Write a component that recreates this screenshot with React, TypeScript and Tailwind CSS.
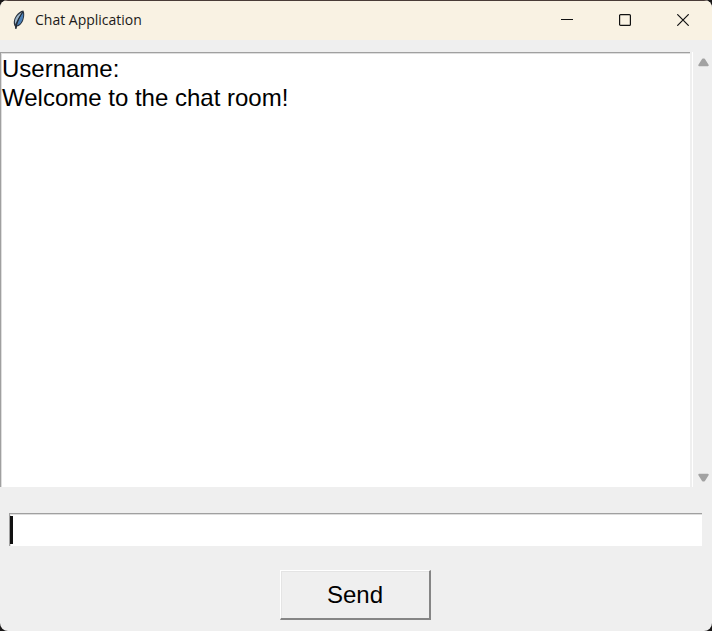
import { useState } from 'react'

function Feather() {
  return (
    <svg viewBox="0 0 14 20" className="h-5 w-3.5" aria-hidden="true">
      <path d="M11.3 0.6C12.8 2.6 12.4 7.6 11 11C9.6 14 7.4 16 5 16.6L4.4 19L3.2 18.8L3 16.6C1 14 1.6 9.4 4 5.8C6 2.9 8.6 1 11.3 0.6Z" fill="#2b3440" />
      <path d="M10 2.2C6.6 3.8 3.6 7.2 2.9 11L3.2 14.6C5 10.6 7.4 6 10 2.2Z" fill="#9db6ca" />
      <path d="M11 2.6C11.7 6 10.8 10 9 12.6C7.6 14.4 6.2 15.2 4.6 15.6C6 11.4 8.2 6.6 11 2.6Z" fill="#4a80b8" />
      <path d="M10.6 2.4C7.6 6.4 5 11.4 3.8 18.6" fill="none" stroke="#1b2129" strokeWidth="0.7" />
    </svg>
  )
}

function TitleBar() {
  const button = 'flex h-full w-[58px] items-center justify-center hover:bg-black/5'

  return (
    <header className="flex h-10 items-center justify-between border-t border-[#4a3c38] bg-[#f9f2e3] pb-px">
      <div className="flex items-center gap-[9px] pl-3">
        <Feather />
        <h1 className="font-['Open_Sans',sans-serif] text-[14px] leading-5 text-[#1b1a18]">Chat Application</h1>
      </div>
      <div className="flex h-full">
        <button type="button" aria-label="Minimize" className={button}>
          <svg viewBox="0 0 12 12" className="h-3 w-3" stroke="#111" strokeWidth="1">
            <path d="M0 5.5H12" />
          </svg>
        </button>
        <button type="button" aria-label="Maximize" className={button}>
          <svg viewBox="0 0 12 12" className="h-3 w-3" fill="none" stroke="#111" strokeWidth="1.2">
            <rect x="0.6" y="0.6" width="10.8" height="10.8" rx="1" />
          </svg>
        </button>
        <button type="button" aria-label="Close" className={button}>
          <svg viewBox="0 0 12 12" className="h-3 w-3" stroke="#111" strokeWidth="1.2">
            <path d="M0.3 0.3L11.7 11.7M11.7 0.3L0.3 11.7" />
          </svg>
        </button>
      </div>
    </header>
  )
}

function ScrollBar() {
  return (
    <div className="flex w-[18px] flex-col items-center justify-between py-1">
      <button type="button" aria-label="Scroll up" className="flex h-3 w-full items-center justify-center">
        <svg viewBox="0 0 11 9" className="h-[9px] w-[11px]">
          <path d="M4.8 1.5H6.2L9.8 7.3H1.2Z" fill="#a2a2a2" stroke="#a2a2a2" strokeWidth="1.8" strokeLinejoin="round" />
        </svg>
      </button>
      <button type="button" aria-label="Scroll down" className="flex h-3 w-full items-center justify-center">
        <svg viewBox="0 0 11 9" className="h-[9px] w-[11px]">
          <path d="M4.8 7.5H6.2L9.8 1.7H1.2Z" fill="#a2a2a2" stroke="#a2a2a2" strokeWidth="1.8" strokeLinejoin="round" />
        </svg>
      </button>
    </div>
  )
}

export default function App() {
  const [log, setLog] = useState('Username:\nWelcome to the chat room!')
  const [message, setMessage] = useState('')

  function send(e: React.FormEvent) {
    e.preventDefault()
    if (!message) return
    setLog(log + '\n' + message)
    setMessage('')
  }

  return (
    <div className="min-h-screen bg-[#1a1818]">
      <div className="flex min-h-screen flex-col overflow-hidden rounded-lg bg-[#efefef] font-['Liberation_Sans',Arial,sans-serif] text-2xl text-black">
        <TitleBar />

        {/* Chat log */}
        <main className="mt-3 flex flex-1">
          <textarea
            readOnly
            aria-label="Chat log"
            value={log}
            className="mr-0.5 flex-1 resize-none border-t border-l border-[#a0a0a0] bg-white pt-px pl-px leading-[29px] shadow-[inset_1px_1px_0_#dedede] outline-none"
          />
          <div className="mr-px w-px bg-white" />
          <ScrollBar />
        </main>

        {/* Message entry */}
        <form onSubmit={send} className="flex flex-col items-center pt-[26px] pr-2.5 pb-[11px] pl-[9px]">
          <div className="relative w-full">
            <input
              type="text"
              aria-label="Message"
              value={message}
              onChange={(e) => setMessage(e.target.value)}
              className="block h-[33px] w-full border-t border-l border-[#a0a0a0] bg-white px-1 caret-transparent shadow-[inset_1px_1px_0_#dedede] outline-none"
            />
            {!message && <span className="absolute top-[3px] left-px h-7 w-[3px] bg-[#111]" />}
          </div>
          <button
            type="submit"
            className="mt-6 h-[50px] w-[151px] border-t border-r-2 border-b-2 border-l border-t-white border-r-[#858585] border-b-[#858585] border-l-white bg-[#efefef] shadow-[inset_1px_1px_0_#e4e4e4]"
          >
            Send
          </button>
        </form>
      </div>
    </div>
  )
}
